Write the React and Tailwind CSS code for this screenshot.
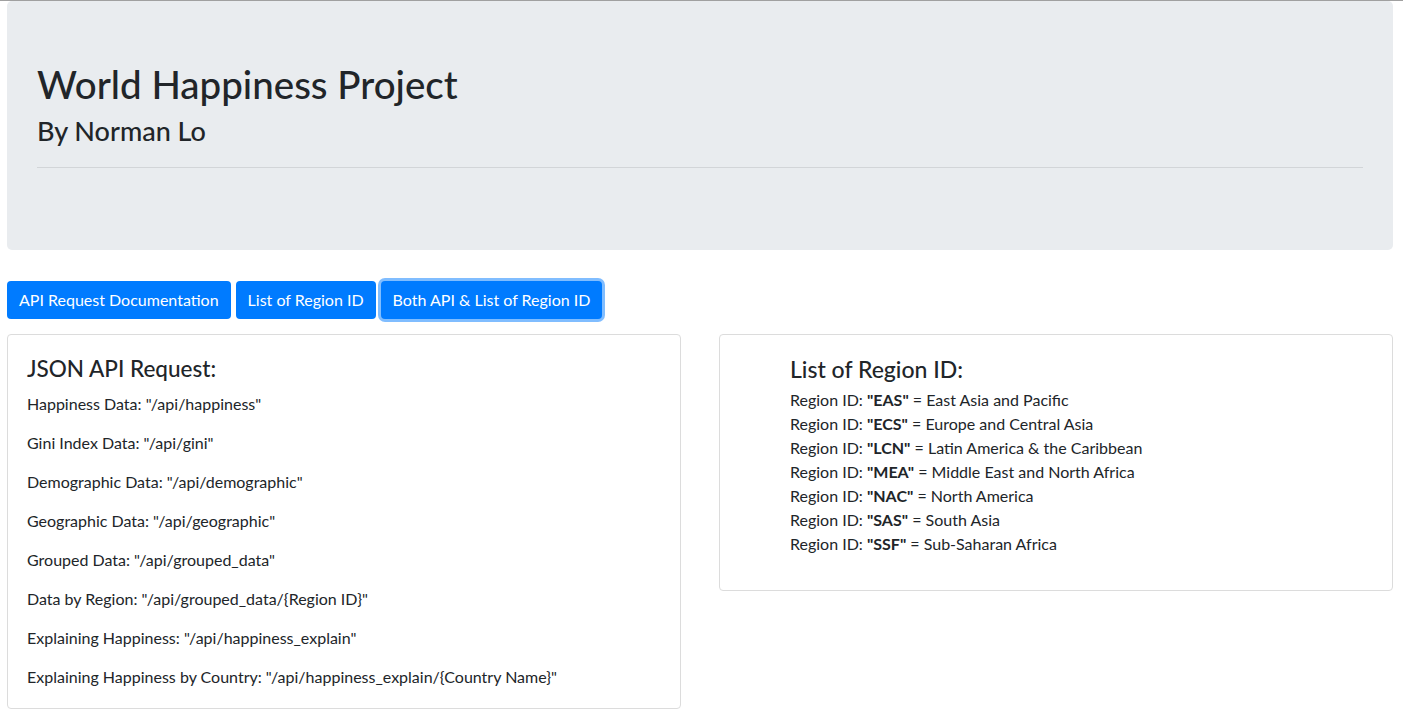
import { useState } from "react";

const apiList = [
  ["Happiness Data", "/api/happiness"],
  ["Gini Index Data", "/api/gini"],
  ["Demographic Data", "/api/demographic"],
  ["Geographic Data", "/api/geographic"],
  ["Grouped Data", "/api/grouped_data"],
  ["Data by Region", "/api/grouped_data/{Region ID}"],
  ["Explaining Happiness", "/api/happiness_explain"],
  ["Explaining Happiness by Country", "/api/happiness_explain/{Country Name}"],
];

const regions = [
  ["EAS", "East Asia and Pacific"],
  ["ECS", "Europe and Central Asia"],
  ["LCN", "Latin America & the Caribbean"],
  ["MEA", "Middle East and North Africa"],
  ["NAC", "North America"],
  ["SAS", "South Asia"],
  ["SSF", "Sub-Saharan Africa"],
];

const App = () => {
  const [view, setView] = useState("both");

  return (
    <div
      className="min-h-screen bg-white text-[#212529] border-t border-[#a0a0a0]"
      style={{ fontFamily: '"Segoe UI", Lato, "Noto Sans", sans-serif' }}
    >
      <div className="pl-[7px] pr-[10px]">
        {/* ================= JUMBOTRON ================= */}
        <div className="bg-[#e9ecef] rounded-[5px] px-[30px] pt-[59px] pb-[66px]">
          <h1 className="text-[38.5px] leading-[48px] font-medium mb-[6px]">
            World Happiness Project
          </h1>
          <h3 className="text-[27px] leading-[33px] font-medium">
            By Norman Lo
          </h3>
          <hr className="mt-[20px] mb-[16px] border-t border-[#d2d5d8]" />
        </div>

        {/* ================= BUTTONS ================= */}
        <div className="flex gap-[5px] mt-[31px] mb-[15px]">
          <button
            onClick={() => setView("api")}
            className="h-[38px] px-[12px] bg-[#007bff] text-white text-[16px] rounded-[4px]"
          >
            API Request Documentation
          </button>
          <button
            onClick={() => setView("region")}
            className="h-[38px] px-[12px] bg-[#007bff] text-white text-[16px] rounded-[4px]"
          >
            List of Region ID
          </button>
          <button
            onClick={() => setView("both")}
            className="h-[38px] px-[12px] bg-[#007bff] text-white text-[16px] rounded-[4px] ring-[3px] ring-[#80bdff]"
          >
            Both API &amp; List of Region ID
          </button>
        </div>

        {/* ================= CARDS ================= */}
        <div className="grid grid-cols-2 gap-[38px] items-start">
          {view !== "region" && (
            <div className="border border-[#dcdcdc] rounded-[4px] px-[19px] pt-[20px] pb-[19px]">
              <h4 className="text-[22.5px] leading-[28px] font-medium mb-[9px]">
                JSON API Request:
              </h4>
              {apiList.map(([label, path], i) => (
                <p
                  key={label}
                  className={`text-[16px] leading-[24px] ${
                    i === apiList.length - 1 ? "" : "mb-[15px]"
                  }`}
                >
                  {label}: "{path}"
                </p>
              ))}
            </div>
          )}

          {view !== "api" && (
            <div className="border border-[#dcdcdc] rounded-[4px] pl-[70px] pr-[20px] pt-[20px] pb-[34px]">
              <h4 className="text-[23px] leading-[28px] font-medium mb-[5px]">
                List of Region ID:
              </h4>
              {regions.map(([id, name]) => (
                <p key={id} className="text-[16px] leading-[24px]">
                  Region ID: <b>"{id}"</b> = {name}
                </p>
              ))}
            </div>
          )}
        </div>
      </div>
    </div>
  );
};

export default App;
